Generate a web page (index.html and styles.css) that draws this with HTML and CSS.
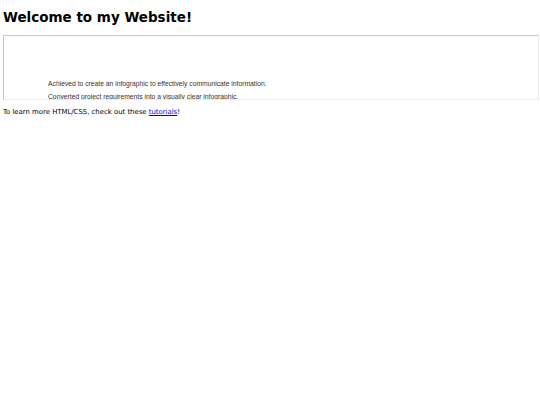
FILE: index.html
```html
<!DOCTYPE html>
<html>
<head>
<meta charset="utf-8">
<link rel="stylesheet" href="styles.css">
</head>
<body class="page">
<h1 class="title">Welcome to my Website!</h1>
<div class="frame">
  <div class="frame-inner">
    <p class="item">Achieved to create an infographic to effectively communicate information.</p>
    <p class="item">Converted project requirements into a visually clear infographic.</p>
  </div>
</div>
<p class="note">To learn more HTML/CSS, check out these <a class="link" href="#">tutorials</a>!</p>
</body>
</html>
```
FILE: styles.css
```css
html, body { background: #fff; }
.page {
  margin: 0;
  padding: 0 1px 0 3px;
  font-family: "DejaVu Sans", sans-serif;
  color: #000;
}
.title {
  font-family: "DejaVu Sans", sans-serif;
  font-weight: bold;
  font-size: 13.5px;
  line-height: 16px;
  margin: 9px 0 10px 0;
}
.frame {
  height: 63px;
  border: 1px solid #c8c8c8;
  border-right-color: #ececec;
  border-bottom-color: #ececec;
  overflow: hidden;
}
.frame-inner {
  padding: 44px 0 0 44px;
}
.item {
  font-family: "Liberation Sans", Arial, sans-serif;
  font-size: 6.75px;
  line-height: 8px;
  color: #333;
  margin: 0 0 5.3px 0;
}
.note {
  font-size: 6.9px;
  line-height: 8px;
  margin: 8px 0;
}
.link { color: #0000ee; }
```
